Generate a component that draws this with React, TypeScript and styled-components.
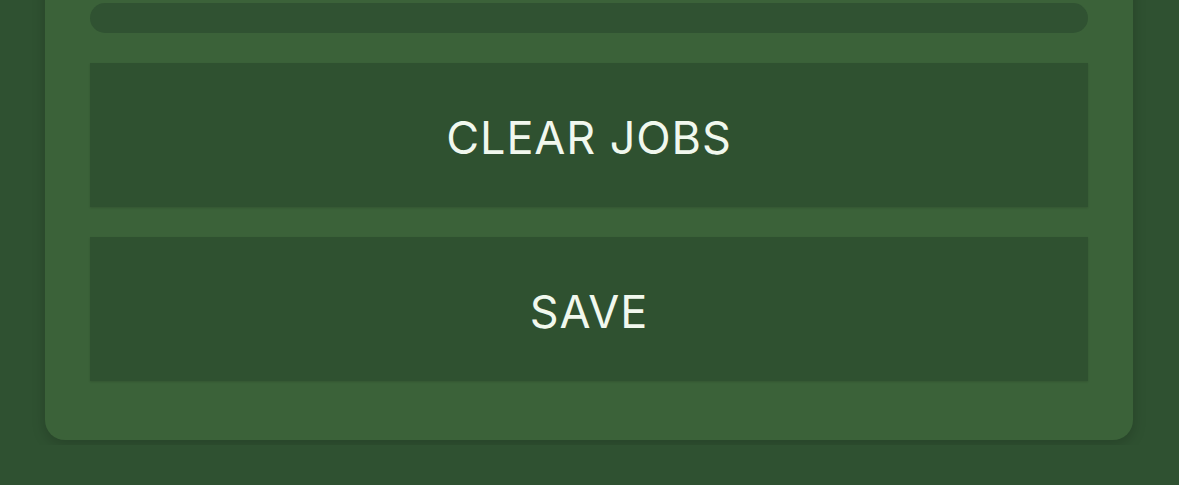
import React from 'react'
import styled, { createGlobalStyle } from 'styled-components'

const GlobalStyle = createGlobalStyle`
  html, body {
    margin: 0;
    padding: 0;
    background: #2f5131;
    font-family: Inter, "Noto Sans", sans-serif;
    overflow: hidden;
  }
`

const Page = styled.div`
  height: 485px;
  padding: 0 46px 0 45px;
  box-sizing: border-box;
`

const Card = styled.div`
  margin-top: -40px;
  padding: 43px 45px 59px;
  background: #3b6239;
  border-radius: 20px;
  box-shadow: 0 4px 14px rgba(0, 0, 0, 0.18);
  display: flex;
  flex-direction: column;
  gap: 30px;
`

const Field = styled.div`
  height: 30px;
  border-radius: 15px;
  background: #305232;
`

const ActionButton = styled.button`
  height: 144px;
  padding: 4px 0 0;
  border: none;
  background: #2f5130;
  color: #f1f8ee;
  font-family: Inter, "Noto Sans", sans-serif;
  font-size: 45px;
  font-weight: 400;
  letter-spacing: 0.9px;
  cursor: pointer;
  box-shadow: 0 1px 2px rgba(0, 0, 0, 0.12);
`

const App = () => (
  <Page>
    <GlobalStyle />
    <Card>
      <Field />
      <ActionButton>CLEAR JOBS</ActionButton>
      <ActionButton>SAVE</ActionButton>
    </Card>
  </Page>
)

export default App
